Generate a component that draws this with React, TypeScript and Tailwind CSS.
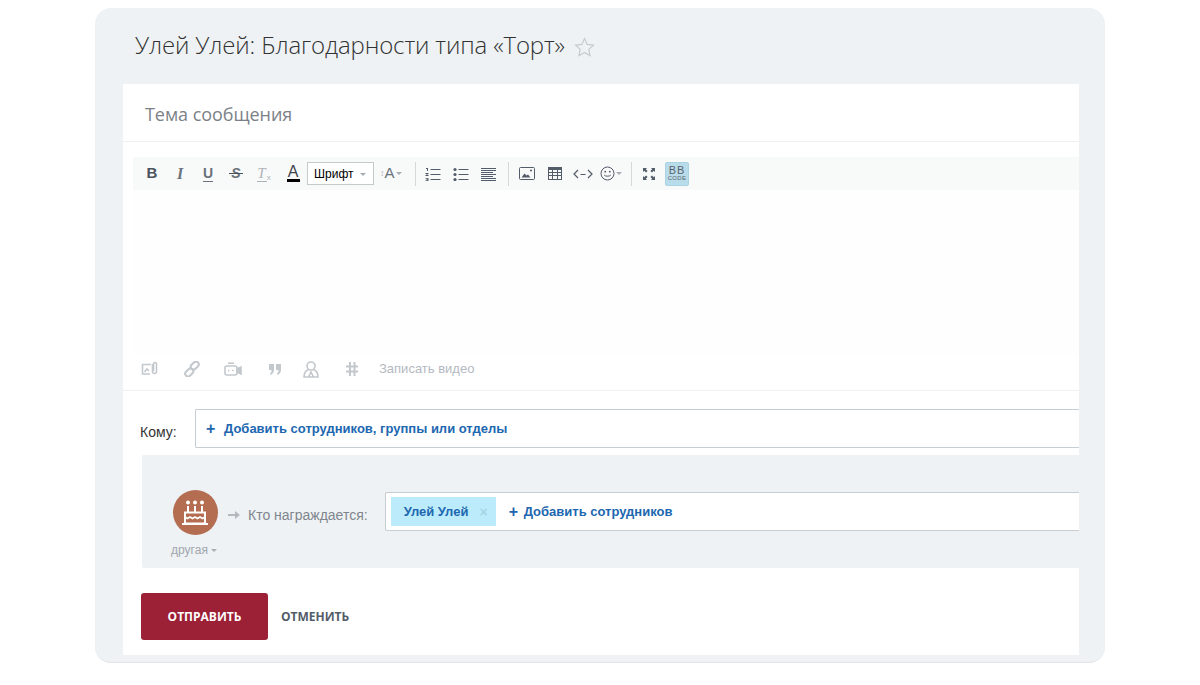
const ink = "#535c69";

function Caret({ className = "" }: { className?: string }) {
  return <span className={`inline-block w-0 h-0 border-x-[3px] border-x-transparent border-t-[3px] border-t-[#a8aeb5] ${className}`}></span>;
}

function Sep({ className = "" }: { className?: string }) {
  return <span className={`block shrink-0 w-px h-[24px] bg-[#d5d9dc] ${className}`}></span>;
}

function Glyph({ children, className = "" }: { children: React.ReactNode; className?: string }) {
  return <span className={`flex items-center justify-center shrink-0 w-[28px] h-[22px] ${className}`}>{children}</span>;
}

function ListIcon({ kind }: { kind: "ol" | "ul" | "align" }) {
  if (kind === "align") {
    return (
      <svg width="16" height="14" viewBox="0 0 16 14" stroke={ink} strokeWidth="1">
        <path d="M0 1.500h15M0 3.500h15M0 5.500h12M0 7.500h15M0 9.500h12M0 11.500h15M0 13.500h15" />
      </svg>
    );
  }
  return (
    <svg width="16" height="14" viewBox="0 0 16 14" fill={ink}>
      <path d="M5.500 2.500h10M5.500 7.500h10M5.500 12.500h10" stroke={ink} strokeWidth="1" />
      {kind === "ul" ? (
        <>
          <circle cx="2" cy="2.500" r="1.600" />
          <circle cx="2" cy="7.500" r="1.600" />
          <circle cx="2" cy="12.500" r="1.600" />
        </>
      ) : (
        <path d="M1 1h2v3H2V2H1zM0.500 6h3v1l-2 1h2v1h-3V8l2-1h-2zM0.500 11h3v3h-3v-.8h2v-.4h-1V12h1v-.3h-2z" />
      )}
    </svg>
  );
}

function Toolbar() {
  return (
    <div className="flex items-center h-[33px] bg-[#f8f9f9] pl-[5px]">
      <Glyph><span className="font-['Liberation_Sans',sans-serif] font-bold text-[15px] text-[#4a535d]">B</span></Glyph>
      <Glyph><span className="font-['Liberation_Serif',serif] font-bold italic text-[16px] text-[#6a727b]">I</span></Glyph>
      <Glyph><span className="font-['Liberation_Sans',sans-serif] font-bold text-[14px] leading-[15px] text-[#6a727b] border-b border-[#6a727b]">U</span></Glyph>
      <Glyph>
        <span className="relative font-['Liberation_Sans',sans-serif] font-bold italic text-[14px] text-[#6a727b]">
          S
          <span className="absolute left-[-2px] right-[-2px] top-[10px] h-px bg-[#4a535d]"></span>
        </span>
      </Glyph>
      <Glyph>
        <span className="font-['Liberation_Serif',serif] italic text-[15px] leading-[15px] text-[#aeb3b9] border-b border-[#aeb3b9] pr-[1px]">T</span>
        <span className="text-[8px] leading-none mt-[8px] text-[#aeb3b9] font-['Liberation_Sans',sans-serif]">x</span>
      </Glyph>
      <span className="flex flex-col items-center w-[14px] ml-[8px] mr-[7px]">
        <span className="font-['Liberation_Sans',sans-serif] text-[16px] leading-[13px] text-[#3d444c]">A</span>
        <span className="w-[13px] h-[3px] bg-black mt-[1px]"></span>
      </span>
      <span className="flex items-center shrink-0 w-[67px] h-[23px] border border-[#c6cacd] bg-white pl-[6px] font-['Liberation_Sans',sans-serif] text-[12px] text-black">
        Шрифт
        <Caret className="ml-[7px] mt-[1px]" />
      </span>
      <span className="flex items-center shrink-0 ml-[6px] w-[26px] font-['Liberation_Sans',sans-serif] text-[15px] text-[#6a727b]">
        <span className="text-[9px] text-[#aeb3b9]">↕</span>A<Caret className="ml-[1px]" />
      </span>
      <Sep className="ml-[9px]" />
      <Glyph className="ml-[3px]"><ListIcon kind="ol" /></Glyph>
      <Glyph><ListIcon kind="ul" /></Glyph>
      <Glyph><ListIcon kind="align" /></Glyph>
      <Sep className="ml-[5px]" />
      <Glyph className="ml-[4px]">
        <svg width="16" height="13" viewBox="0 0 16 13" fill="none" stroke={ink}>
          <rect x="0.500" y="0.500" width="15" height="12" rx="1" />
          <path d="M2.500 10.500l3-4 2 2 1.500-1 2.500 3z" fill={ink} stroke="none" />
          <circle cx="12" cy="3.500" r="1" fill={ink} stroke="none" />
        </svg>
      </Glyph>
      <Glyph>
        <svg width="14" height="13" viewBox="0 0 14 13" fill="none" stroke={ink}>
          <rect x="0.500" y="0.500" width="13" height="12" />
          <path d="M0.500 1.500h13M0.500 2.500h13M0.500 5.500h13M0.500 8.500h13M4.500 3v9M9.500 3v9" />
        </svg>
      </Glyph>
      <Glyph>
        <svg width="20" height="10" viewBox="0 0 20 10" fill="none" stroke={ink} strokeWidth="1.200">
          <path d="M5 1L1 5l4 4M15 1l4 4-4 4M7.500 5.500h5" />
        </svg>
      </Glyph>
      <span className="flex items-center shrink-0 w-[24px] ml-[3px]">
        <svg width="15" height="15" viewBox="0 0 15 15" fill="none" stroke={ink}>
          <circle cx="7.500" cy="7.500" r="6.500" />
          <circle cx="5.200" cy="5.700" r="0.900" fill={ink} stroke="none" />
          <circle cx="9.800" cy="5.700" r="0.900" fill={ink} stroke="none" />
          <path d="M4.200 9c.8 1.600 5.800 1.600 6.600 0" />
        </svg>
        <Caret className="ml-[1px]" />
      </span>
      <Sep className="ml-[7px]" />
      <Glyph className="ml-[3px]">
        <svg width="14" height="14" viewBox="0 0 14 14" fill={ink}>
          <path d="M1 1h4L3.800 2.200 5.600 4 4 5.600 2.200 3.800 1 5zM13 1v4l-1.200-1.200L10 5.600 8.400 4l1.800-1.800L9 1zM1 13V9l1.200 1.200L4 8.400 5.600 10l-1.800 1.800L5 13zM13 13H9l1.200-1.200L8.400 10 10 8.400l1.800 1.800L13 9z" />
        </svg>
      </Glyph>
      <span className="flex flex-col items-center justify-center shrink-0 w-[24px] h-[24px] ml-[2px] rounded-[2px] bg-[#b9dcea] border border-[#a9d2e3] font-['Liberation_Sans',sans-serif] text-[#59626c]">
        <span className="text-[11px] leading-[10px] tracking-[1px]">BB</span>
        <span className="text-[6px] leading-[7px] tracking-[0.3px]">CODE</span>
      </span>
    </div>
  );
}

function AttachRow() {
  return (
    <div className="flex items-center h-[36px] pl-[8px] pb-[6px] text-[#c3c8cd]">
      <span className="flex justify-center w-[18px]">
        <svg width="18" height="16" viewBox="0 0 18 16" fill="none" stroke="#c3c8cd" strokeWidth="1.600">
          <path d="M9 13H1.500V3.500H10" />
          <path d="M3.500 11l2.500-3 2 2" />
          <path d="M11.500 3v7.500a2 2 0 0 0 4 0V3a1.500 1.500 0 0 0-3 0v7" />
        </svg>
      </span>
      <span className="flex justify-center w-[18px] ml-[24px]">
        <svg width="16" height="16" viewBox="0 0 16 16" fill="none" stroke="#c3c8cd" strokeWidth="2">
          <rect x="8" y="0" width="5.500" height="9" rx="2.700" transform="rotate(45 10.750 4.500)" />
          <rect x="2.500" y="7" width="5.500" height="9" rx="2.700" transform="rotate(45 5.250 11.500)" />
        </svg>
      </span>
      <span className="flex justify-center w-[18px] ml-[23px]">
        <svg width="18" height="15" viewBox="0 0 18 15" fill="none" stroke="#c3c8cd" strokeWidth="1.600">
          <rect x="1" y="4" width="12" height="9" rx="2" />
          <path d="M4 1.200h6" />
          <path d="M13 7l4-2v7l-4-2z" fill="#c3c8cd" />
          <path d="M4 8.500h1.500M8 8.500h1.500" />
        </svg>
      </span>
      <span className="flex justify-center w-[14px] ml-[26px]">
        <svg width="12" height="11" viewBox="0 0 12 11" fill="#c3c8cd">
          <path d="M0 0h5v5.500C5 8 4 10 1.500 11L1 9.500C2 9 2.500 8 2.500 6H0zM7 0h5v5.500C12 8 11 10 8.500 11L8 9.500C9 9 9.500 8 9.500 6H7z" />
        </svg>
      </span>
      <span className="flex justify-center w-[16px] ml-[21px]">
        <svg width="16" height="17" viewBox="0 0 16 17" fill="none" stroke="#c3c8cd" strokeWidth="1.600">
          <circle cx="8" cy="5" r="4" />
          <path d="M5.500 8.500C3 9.500 1 12 1 16h14c0-4-2-6.500-4.500-7.500M5.500 16l2.500-5 2.500 5" />
        </svg>
      </span>
      <span className="flex justify-center w-[14px] ml-[26px]">
        <svg width="12" height="14" viewBox="0 0 12 14" fill="none" stroke="#c3c8cd" strokeWidth="2">
          <path d="M4 0v14M8.500 0v14M0 4.500h12M0 9.500h12" />
        </svg>
      </span>
      <span className="ml-[20px] font-['Liberation_Sans',sans-serif] text-[13px] text-[#b4b9bf]">Записать видео</span>
    </div>
  );
}

function CakeIcon() {
  return (
    <svg width="26" height="26" viewBox="0 0 26 26" fill="none" stroke="#fff">
      <circle cx="6" cy="2.500" r="2" fill="#fff" stroke="none" />
      <circle cx="13" cy="2.500" r="2" fill="#fff" stroke="none" />
      <circle cx="20" cy="2.500" r="2" fill="#fff" stroke="none" />
      <path d="M6 6v6M13 6v6M20 6v6" strokeWidth="2" />
      <path d="M3 12.500h20v11H3z" strokeWidth="2" />
      <path d="M0 24h26" strokeWidth="2" />
      <path d="M3 17l2.500 1.500L8 17l2.500 1.500L13 17l2.500 1.500L18 17l2.500 1.500L23 17" strokeWidth="1.600" />
    </svg>
  );
}

export default function App() {
  return (
    <div className="h-[685px] bg-white pt-[8px] overflow-hidden">
      <div className="w-[1010px] h-[655px] ml-[95px] rounded-[16px] bg-[#eef2f4] border-b border-[#e2e5e7] pl-[28px] pr-[26px]">
        <div className="flex items-center h-[76px] pl-[12px] pb-[2px] font-['Open_Sans',sans-serif] font-light text-[24px] tracking-[-0.13px] text-[#333]">
          Улей Улей: Благодарности типа «Торт»
          <svg className="ml-[9px] mt-[3px]" width="21" height="20" viewBox="0 0 21 20" fill="none" stroke="#c3c8cd" strokeWidth="1.100">
            <path d="M10.500 1.500l2.700 5.900 6.300.7-4.700 4.300 1.300 6.300-5.600-3.200-5.600 3.200 1.300-6.300L1.500 8.100l6.300-.7z" />
          </svg>
        </div>
        <div className="h-[571px] bg-white overflow-hidden">
          <div className="flex items-center h-[58px] pl-[22px] pt-[3px] border-b border-[#eef0f2] font-['Open_Sans',sans-serif] text-[18px] tracking-[-0.05px] text-[#7b8187]">
            Тема сообщения
          </div>
          <div className="pl-[10px] pt-[15px]">
            <Toolbar />
            <div className="h-[164px] bg-[#fefefe]"></div>
            <AttachRow />
          </div>
          <div className="border-t border-[#eef0f2] pt-[18px]">
            <div className="flex items-center">
              <span className="w-[72px] pl-[17px] pt-[8px] font-['Liberation_Sans',sans-serif] text-[14px] text-[#333]">Кому:</span>
              <div className="flex flex-1 items-center h-[39px] pl-[10px] border border-r-0 border-[#c6cdd3] rounded-l-[2px] font-['Liberation_Sans',sans-serif] font-bold text-[13px] text-[#2067b0]">
                <span className="w-[18px] text-[16px] font-bold leading-none">+</span>
                Добавить сотрудников, группы или отделы
              </div>
            </div>
            <div className="flex ml-[19px] h-[113px] mt-[7px] bg-[#eef2f4] rounded-l-[2px] pl-[30px] pt-[35px]">
              <div className="flex flex-col items-center w-[46px]">
                <span className="flex items-center justify-center w-[45px] h-[45px] rounded-full bg-[#b46d51]">
                  <CakeIcon />
                </span>
                <span className="flex items-center mt-[6px] -ml-[2px] whitespace-nowrap font-['Liberation_Sans',sans-serif] text-[12px] text-[#a0a6ad]">
                  другая
                  <Caret className="ml-[3px]" />
                </span>
              </div>
              <div className="flex flex-1 items-start pl-[10px] pt-[2px]">
                <span className="flex items-center h-[40px] pt-[6px] font-['Liberation_Sans',sans-serif] text-[14px] text-[#80868e]">
                  <svg className="mr-[8px]" width="12" height="10" viewBox="0 0 12 10" fill="#b4b9bf">
                    <path d="M0 4h7V1l5 4-5 4V6H0z" />
                  </svg>
                  Кто награждается:
                </span>
                <div className="flex flex-1 items-center h-[39px] ml-[17px] pl-[5px] bg-white border border-r-0 border-[#c6cdd3] rounded-l-[2px] font-['Liberation_Sans',sans-serif] font-bold text-[13px] text-[#2067b0]">
                  <span className="flex items-center h-[29px] w-[105px] pl-[13px] bg-[#bcecfb]">
                    Улей Улей
                    <span className="ml-[11px] text-[14px] leading-none text-[#a8d5e6]">×</span>
                  </span>
                  <span className="ml-[13px] w-[15px] text-[16px] font-bold leading-none">+</span>
                  Добавить сотрудников
                </div>
              </div>
            </div>
            <div className="flex items-center mt-[25px] ml-[18px]">
              <button className="w-[127px] h-[47px] rounded-[3px] bg-[#9c2036] font-['Open_Sans',sans-serif] font-bold text-[12px] text-white">ОТПРАВИТЬ</button>
              <span className="ml-[13px] font-['Open_Sans',sans-serif] font-bold text-[12px] text-[#535c69]">ОТМЕНИТЬ</span>
            </div>
          </div>
        </div>
      </div>
    </div>
  );
}
